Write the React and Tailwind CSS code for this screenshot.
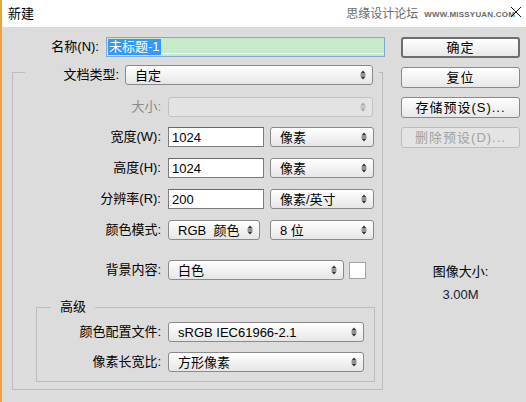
const font = "font-['Liberation_Sans','Noto_Sans_CJK_SC',sans-serif]";

const Arrows = ({ disabled }) => (
    <svg width="6" height="10" viewBox="0 0 6 10" className="shrink-0">
        <g fill={disabled ? '#a8a8a8' : '#333'}>
            <path d="M3 0.5 L5.6 3.6 L0.4 3.6 Z" />
            <rect x="0.5" y="4.5" width="5" height="1" />
            <path d="M0.4 6.4 L5.6 6.4 L3 9.5 Z" />
        </g>
    </svg>
);

const Select = ({ className, text, disabled }) => (
    <div
        className={`${className} h-[20px] flex items-center justify-between pl-[9px] pr-[6px] rounded-[3px] border ${
            disabled
                ? 'border-[#c2c2c2] bg-[#e3e3e3]'
                : 'border-[#8a8a8a] bg-gradient-to-b from-white to-[#e6e6e6]'
        }`}
    >
        <span className="leading-none whitespace-pre">{text}</span>
        <Arrows disabled={disabled} />
    </div>
);

const Input = ({ value }) => (
    <div className="w-[96px] h-[20px] flex items-center pl-[3px] bg-white border border-[#7c7c7c] border-t-[#6a6a6a]">
        <span className="leading-none">{value}</span>
    </div>
);

const Row = ({ label, children, className, labelWidth = 'w-[148px]', dim }) => (
    <div className={`flex items-center h-[20px] ${className}`}>
        <div className={`${labelWidth} text-right shrink-0 ${dim ? 'text-[#8a8a8a]' : ''}`}>{label}</div>
        <div className="ml-[7px] flex items-center">{children}</div>
    </div>
);

const Button = ({ children, primary, disabled, className }) => (
    <div
        className={`${className} w-[119px] h-[21px] flex items-center justify-center rounded-[3px] ${
            primary
                ? 'border-2 border-[#6e6e6e] bg-gradient-to-b from-white to-[#e8e8e8]'
                : disabled
                ? 'border border-[#bcbcbc] bg-[#e4e4e4] text-[#a2a2a2]'
                : 'border border-[#8a8a8a] bg-gradient-to-b from-white to-[#e8e8e8]'
        }`}
    >
        <span className="tracking-[1px]">{children}</span>
    </div>
);

export default function App() {
    return (
        <div className={`w-[526px] h-[402px] bg-[#dcdcdc] border-l-2 border-[#e7a443] text-[13px] text-black ${font}`}>
            {/* title bar */}
            <div className="h-[27px] bg-white flex items-center pl-[6px]">
                <span>新建</span>
                <span className="ml-auto text-[#6a6a6a] text-[12px]">思缘设计论坛</span>
                <span className="ml-[6px] text-[#6a6a6a] text-[8px] font-bold tracking-[0.2px] mt-[2px]">WWW.MISSYUAN.COM</span>
                <svg width="12" height="12" viewBox="0 0 12 12" className="self-start mt-[6px] ml-[-5px] mr-[4px]">
                    <path d="M1 1 L11 11 M11 1 L1 11" stroke="#111" strokeWidth="1" />
                </svg>
            </div>

            <div className="flex">
                {/* left side */}
                <div className="w-[388px] pt-[10px]">
                    <div className="flex items-center h-[20px]">
                        <div className="w-[97px] text-right">名称(N):</div>
                        <div className="ml-[7px] w-[279px] h-[20px] flex items-center pl-[1px] bg-[#c7eacc] border border-[#84a9cf] shadow-[inset_0_-2px_0_#c7eacc,inset_0_-3px_0_#ffffff]">
                            <span className="bg-[#3399ff] text-white leading-[16px] px-[1px]">未标题-1</span>
                        </div>
                    </div>

                    <fieldset className="ml-[10px] mt-[2px] w-[371px] border border-[#bdbdbd] pb-[7px]">
                        <legend className="ml-[12px] pt-[6px] pr-[6px]">
                            <div className="flex items-center h-[20px]">
                                <div className="w-[94px] text-right">文档类型:</div>
                                <Select className="ml-[6px] w-[248px]" text="自定" />
                            </div>
                        </legend>

                        <Row label="大小:" dim className="mt-[12px]">
                            <Select className="w-[205px]" text="" disabled />
                        </Row>
                        <Row label="宽度(W):" className="mt-[10px]">
                            <Input value="1024" />
                            <Select className="ml-[6px] w-[104px]" text="像素" />
                        </Row>
                        <Row label="高度(H):" className="mt-[11px]">
                            <Input value="1024" />
                            <Select className="ml-[6px] w-[104px]" text="像素" />
                        </Row>
                        <Row label="分辨率(R):" className="mt-[11px]">
                            <Input value="200" />
                            <Select className="ml-[6px] w-[104px]" text="像素/英寸" />
                        </Row>
                        <Row label="颜色模式:" className="mt-[11px]">
                            <Select className="w-[92px]" text="RGB  颜色" />
                            <Select className="ml-[10px] w-[104px]" text="8 位" />
                        </Row>
                        <Row label="背景内容:" className="mt-[20px]">
                            <Select className="w-[176px]" text="白色" />
                            <div className="ml-[5px] w-[17px] h-[17px] bg-white border border-[#a4a4a4]" />
                        </Row>

                        <fieldset className="ml-[23px] mt-[19px] w-[339px] border border-[#bdbdbd] pb-[9px]">
                            <legend className="ml-[14px] px-[9px] leading-[16px]">高级</legend>
                            <Row label="颜色配置文件:" labelWidth="w-[124px]" className="mt-[7px]">
                                <Select className="w-[196px]" text="sRGB IEC61966-2.1" />
                            </Row>
                            <Row label="像素长宽比:" labelWidth="w-[124px]" className="mt-[10px]">
                                <Select className="w-[196px]" text="方形像素" />
                            </Row>
                        </fieldset>
                    </fieldset>
                </div>

                {/* right side */}
                <div className="flex-1 pt-[10px] pl-[11px]">
                    <Button primary>确定</Button>
                    <Button className="mt-[9px]">复位</Button>
                    <Button className="mt-[9px]">存储预设(S)...</Button>
                    <Button className="mt-[9px]" disabled>删除预设(D)...</Button>

                    <div className="w-[119px] mt-[116px] text-center leading-[16px]">图像大小:</div>
                    <div className="w-[119px] mt-[7px] text-center leading-[16px] text-[#1b1b3a]">3.00M</div>
                </div>
            </div>
        </div>
    );
}
